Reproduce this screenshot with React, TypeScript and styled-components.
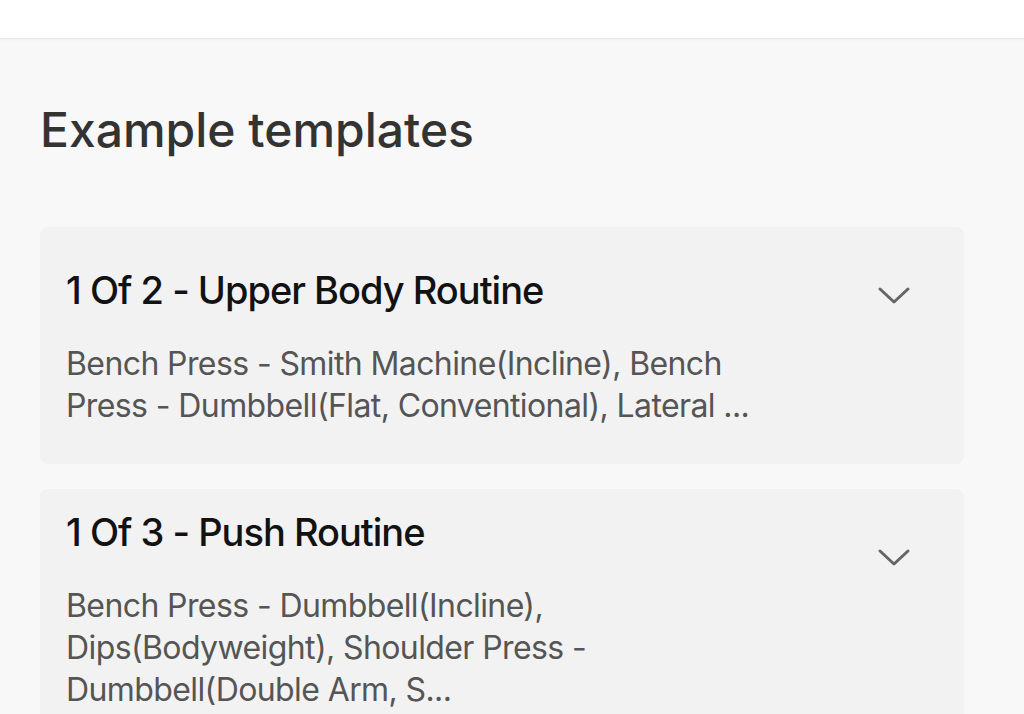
import React from "react";
import styled, { createGlobalStyle } from "styled-components";

const Global = createGlobalStyle`
  html, body { margin: 0; padding: 0; background: #f8f8f8; }
  body { font-family: "Inter", "Noto Sans", sans-serif; }
  * { box-sizing: border-box; }
`;

const Page = styled.div`
  width: 1024px;
  height: 714px;
  overflow: hidden;
  background: #f8f8f8;
  display: flex;
  flex-direction: column;
`;

const TopBar = styled.div`
  height: 39px;
  flex: none;
  background: #ffffff;
  border-bottom: 1px solid #e6e6e6;
  box-shadow: 0 1px 2px rgba(0, 0, 0, 0.03);
`;

const Content = styled.main`
  padding: 0 60px 0 40px;
  display: flex;
  flex-direction: column;
`;

const Heading = styled.h1`
  margin: 62px 0 0;
  font-size: 48px;
  line-height: 58px;
  font-weight: 500;
  color: #333333;
  letter-spacing: 0px;
`;

const List = styled.div`
  margin-top: 68px;
  display: flex;
  flex-direction: column;
  gap: 25px;
`;

const Card = styled.div<{ $pt: number; $h: number }>`
  background: #f2f2f2;
  border-radius: 8px;
  padding: ${(p) => p.$pt}px 53px 0 26px;
  height: ${(p) => p.$h}px;
  display: flex;
  align-items: flex-start;
  gap: 20px;
`;

const TextCol = styled.div`
  flex: 1;
  min-width: 0;
`;

const Title = styled.h2`
  margin: 0;
  font-size: 38px;
  line-height: 46px;
  font-weight: 550;
  color: #121212;
  letter-spacing: -1px;
`;

const Desc = styled.p<{ $mt: number; $w: number }>`
  margin: ${(p) => p.$mt}px 0 0;
  max-width: ${(p) => p.$w}px;
  font-size: 32px;
  line-height: 42px;
  font-weight: 400;
  color: #555555;
  letter-spacing: -0.6px;
`;

const Chevron = styled.svg<{ $mt: number }>`
  flex: none;
  width: 34px;
  height: 34px;
  margin-top: ${(p) => p.$mt}px;
  color: #666666;
`;

const ChevronIcon = ({ mt }: { mt: number }) => (
  <Chevron $mt={mt} viewBox="0 0 34 34" fill="none">
    <path d="M3 10 L17 23 L31 10" stroke="currentColor" strokeWidth="3" strokeLinecap="round" strokeLinejoin="round" />
  </Chevron>
);

const templates = [
  {
    title: "1 Of 2 - Upper Body Routine",
    desc: "Bench Press - Smith Machine(Incline), Bench Press - Dumbbell(Flat, Conventional), Lateral ...",
    pt: 40,
    chev: 12,
    descMt: 30,
    h: 237,
    w: 720,
  },
  {
    title: "1 Of 3 - Push Routine",
    desc: "Bench Press - Dumbbell(Incline), Dips(Bodyweight), Shoulder Press - Dumbbell(Double Arm, S...",
    pt: 20,
    chev: 32,
    descMt: 30,
    h: 260,
    w: 560,
  },
];

export default function App() {
  return (
    <Page>
      <Global />
      <TopBar />
      <Content>
        <Heading>Example templates</Heading>
        <List>
          {templates.map((t, i) => (
            <Card key={i} $pt={t.pt} $h={t.h}>
              <TextCol>
                <Title>{t.title}</Title>
                <Desc $mt={t.descMt} $w={t.w}>{t.desc}</Desc>
              </TextCol>
              <ChevronIcon mt={t.chev} />
            </Card>
          ))}
        </List>
      </Content>
    </Page>
  );
}
